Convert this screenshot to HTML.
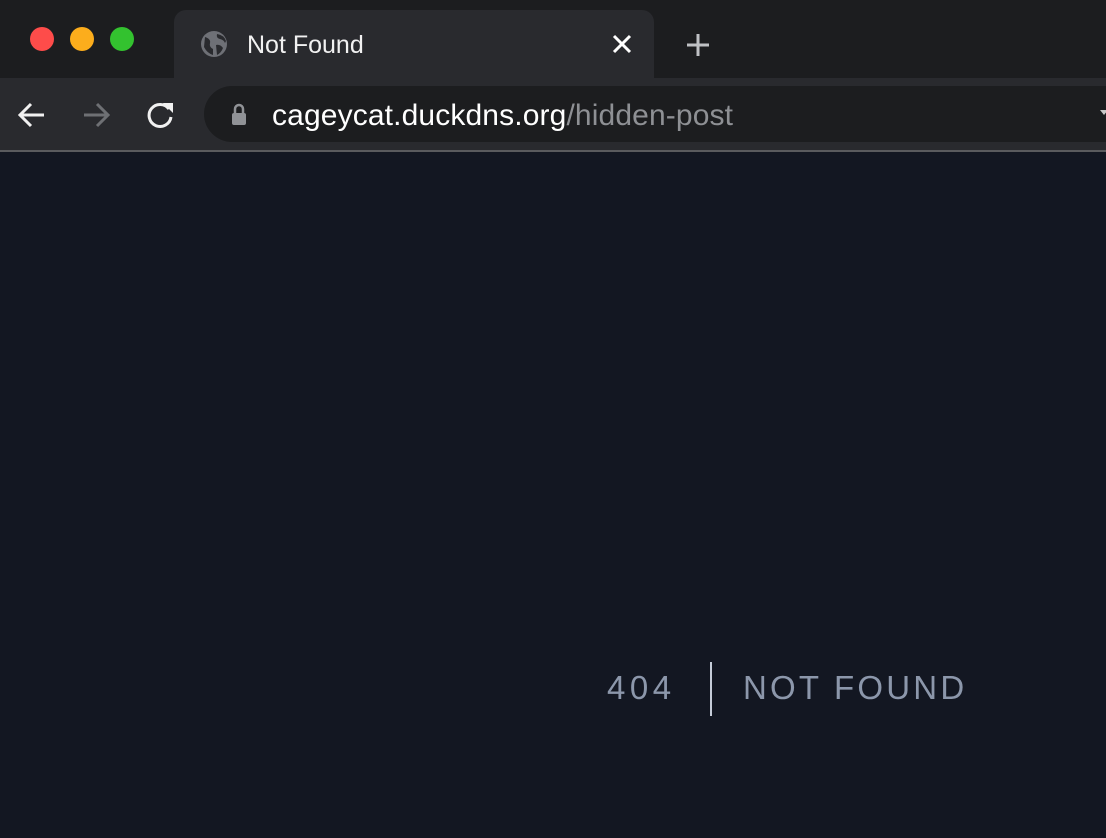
<!DOCTYPE html>
<html><head><style>
body{margin:0;width:1106px;height:838px;overflow:hidden;background:#131722;font-family:"Liberation Sans",sans-serif;position:relative}
.top{position:absolute;left:0;top:0;width:1106px;height:78px;background:#1c1d1f}
.tab{position:absolute;left:174px;top:10px;width:480px;height:68px;background:#292a2e;border-radius:12px 12px 0 0}
.bar{position:absolute;left:0;top:78px;width:1106px;height:72px;background:#292a2e}
.line{position:absolute;left:0;top:150px;width:1106px;height:2px;background:#5a5b5e}
.dot{position:absolute;top:27px;width:24px;height:24px;border-radius:50%}
.omni{position:absolute;left:204px;top:86px;width:940px;height:56px;background:#1c1d1f;border-radius:28px}
.t{position:absolute;color:#fff;white-space:nowrap}
</style></head><body>
<div class="top"></div>
<div class="tab"></div>
<div class="dot" style="left:30px;background:#fe4c4a"></div>
<div class="dot" style="left:70px;background:#fcad1c"></div>
<div class="dot" style="left:110px;background:#33c22f"></div>
<svg style="position:absolute;left:199px;top:29px" width="30" height="30" viewBox="0 0 30 30"><circle cx="15" cy="15" r="13" fill="#6e7076"/><path d="M6 8 Q12 10 11 14 Q10 18 14 20 L14 26 Q8 24 5 18Z M18 5 Q17 9 21 10 Q25 11 26 14 L27 12 Q25 6 18 5Z M17 16 Q21 15 24 19 Q22 24 18 26Z" fill="#292a2e"/></svg>
<div class="t" style="left:247px;top:31px;font-size:25px;color:#f1f1f1">Not Found</div>
<svg style="position:absolute;left:611px;top:33px" width="22" height="22"><path d="M3 3L19 19M19 3L3 19" stroke="#fff" stroke-width="3"/></svg>
<svg style="position:absolute;left:685px;top:32px" width="26" height="26"><path d="M13 2V24M2 13H24" stroke="#bfc1c4" stroke-width="3"/></svg>
<div class="bar"></div>
<div class="line"></div>
<svg style="position:absolute;left:16px;top:100px" width="32" height="30"><path d="M28 15H4M15 4L4 15L15 26" stroke="#f1f1f1" stroke-width="3" fill="none"/></svg>
<svg style="position:absolute;left:80px;top:100px" width="32" height="30"><path d="M4 15H28M17 4L28 15L17 26" stroke="#6e7074" stroke-width="3" fill="none"/></svg>
<svg style="position:absolute;left:144px;top:98px" width="34" height="34"><path d="M25 11A11 11 0 1 0 27 19" stroke="#f1f1f1" stroke-width="3" fill="none"/><path d="M19 5L29 5L29 15Z" fill="#f1f1f1"/></svg>
<div class="omni"></div>
<svg style="position:absolute;left:230px;top:102px" width="18" height="24"><path d="M5 11V7a4 4 0 0 1 8 0v4" stroke="#909296" stroke-width="2.5" fill="none"/><rect x="2" y="11" width="14" height="12" rx="2" fill="#909296"/></svg>
<div class="t" style="left:272px;top:99px;font-size:30px;letter-spacing:0.13px;color:#fff">cageycat.duckdns.org<span style="color:#8e9094">/hidden-post</span></div>
<svg style="position:absolute;left:1100px;top:110px" width="6" height="6"><path d="M0 0H8L4 5Z" fill="#c8c8c8"/></svg>
<div class="t" style="left:607px;top:669px;font-size:33px;color:#8c97ab;letter-spacing:4.5px">404</div>
<div style="position:absolute;left:710px;top:662px;width:2px;height:54px;background:#c5ccd8"></div>
<div class="t" style="left:743px;top:669px;font-size:33px;color:#8c97ab;letter-spacing:3.2px">NOT FOUND</div>
</body></html>
